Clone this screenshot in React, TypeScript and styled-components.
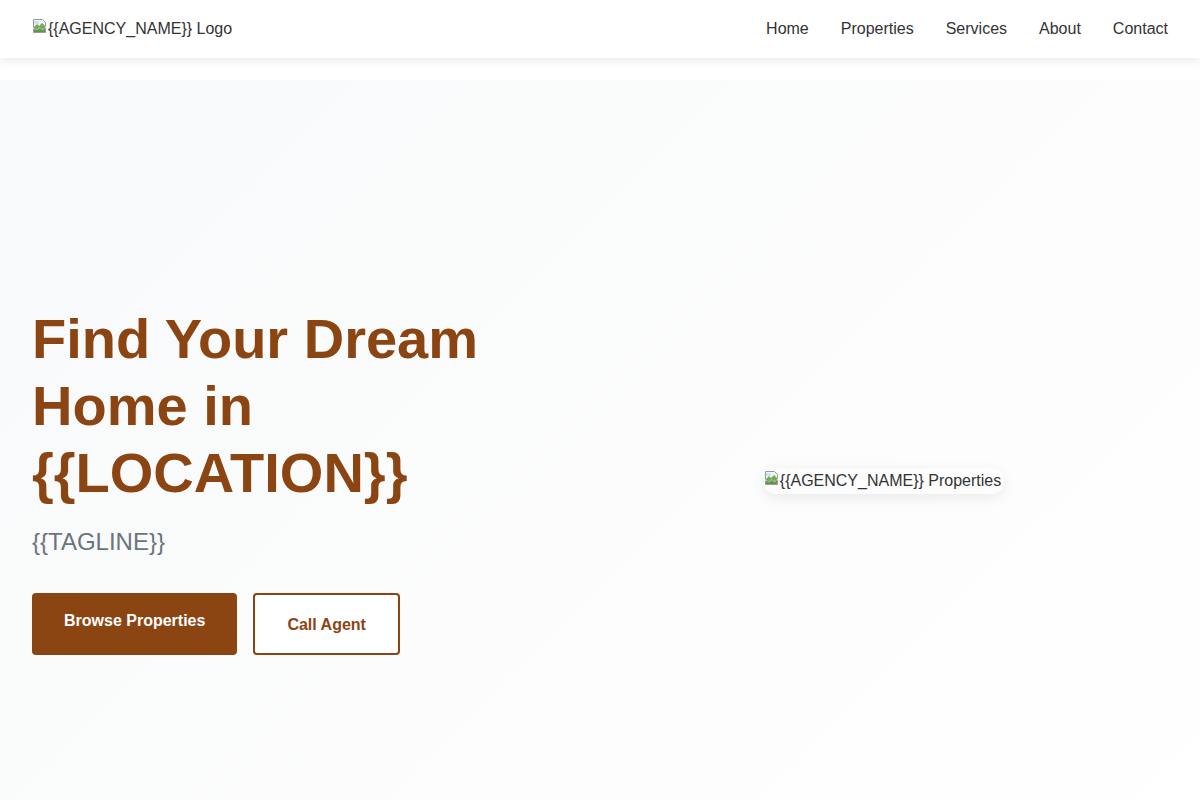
import React from "react";
import styled, { createGlobalStyle } from "styled-components";

const Global = createGlobalStyle`
  * { box-sizing: border-box; }
  html, body { margin: 0; padding: 0; background: #fff; }
  body { font-family: "Liberation Sans", Arial, sans-serif; color: #333; }
`;

const Header = styled.header`
  height: 58px;
  background: #fff;
  box-shadow: 0 2px 10px rgba(0, 0, 0, 0.1);
  display: flex;
  align-items: center;
  justify-content: space-between;
  padding: 0 32px;
  position: relative;
  z-index: 2;
`;

const Logo = styled.div`
  display: flex;
  align-items: flex-start;
  font-size: 16px;
  color: #333;
  line-height: 18px;
  margin-top: -1px;
`;

const Nav = styled.nav`
  display: flex;
  gap: 32px;
`;

const NavLink = styled.a`
  font-size: 16px;
  color: #333;
  text-decoration: none;
`;

const Hero = styled.section`
  margin-top: 22px;
  min-height: 800px;
  background: linear-gradient(135deg, #f8f9fa 0%, #ffffff 100%);
  display: grid;
  grid-template-columns: 1fr 1fr;
  align-items: center;
  padding: 0 32px;
`;

const Left = styled.div`
  display: flex;
  flex-direction: column;
  align-items: flex-start;
`;

const Title = styled.h1`
  margin: 0 0 20px;
  font-size: 56px;
  line-height: 1.2;
  font-weight: 700;
  color: #8b4513;
`;

const Tagline = styled.p`
  margin: 0 0 36px;
  font-size: 24px;
  line-height: 1.3;
  color: #6c757d;
`;

const Buttons = styled.div`
  display: flex;
  gap: 16px;
`;

const Button = styled.a<{ $outline?: boolean }>`
  display: inline-block;
  font-size: 16px;
  font-weight: 700;
  line-height: 18px;
  border-radius: 4px;
  text-decoration: none;
  height: 62px;
  ${(p) =>
    p.$outline
      ? `background: #fff; color: #8b4513; border: 2px solid #8b4513; padding: 21px 32px 19px;`
      : `background: #8b4513; color: #fff; border: none; padding: 19px 32px 25px;`}
`;

const Right = styled.div`
  display: flex;
  justify-content: center;
`;

const ImageBox = styled.div`
  display: inline-flex;
  align-items: flex-start;
  height: 26px;
  padding-top: 4px;
  padding-right: 3px;
  border-radius: 12px;
  box-shadow: 0 4px 14px rgba(0, 0, 0, 0.08);
  font-size: 16px;
  line-height: 18px;
  color: #333;
  margin-top: 2px;
`;

const BrokenIcon = () => (
  <svg width="16" height="16" viewBox="0 0 16 16" style={{ flexShrink: 0, marginTop: -2 }}>
    <path d="M1.5 1.5h9l3 3v4l-3 2-3-2-2 2-4-1z" fill="#f4f4f4" stroke="#9a9a9a" strokeWidth="1" />
    <path d="M2 9l3-3 2 2 3-3 3 3v1.5l-2.5 1.7-3-2-2 2-3.5-.8z" fill="#6fae54" />
    <path d="M2 3h5v3H2z" fill="#cfe3f3" />
    <path d="M1.5 11l4 1 2-2 3 2 3-2v4.5h-12z" fill="#5c9a3d" stroke="#9a9a9a" strokeWidth="1" />
  </svg>
);

export default function App() {
  return (
    <>
      <Global />
      <Header>
        <Logo>
          <BrokenIcon />
          <span>{"{{AGENCY_NAME}} Logo"}</span>
        </Logo>
        <Nav>
          <NavLink href="#">Home</NavLink>
          <NavLink href="#">Properties</NavLink>
          <NavLink href="#">Services</NavLink>
          <NavLink href="#">About</NavLink>
          <NavLink href="#">Contact</NavLink>
        </Nav>
      </Header>
      <Hero>
        <Left>
          <Title>Find Your Dream Home in {"{{LOCATION}}"}</Title>
          <Tagline>{"{{TAGLINE}}"}</Tagline>
          <Buttons>
            <Button href="#">Browse Properties</Button>
            <Button href="#" $outline>
              Call Agent
            </Button>
          </Buttons>
        </Left>
        <Right>
          <ImageBox>
            <BrokenIcon />
            <span>{"{{AGENCY_NAME}} Properties"}</span>
          </ImageBox>
        </Right>
      </Hero>
    </>
  );
}
